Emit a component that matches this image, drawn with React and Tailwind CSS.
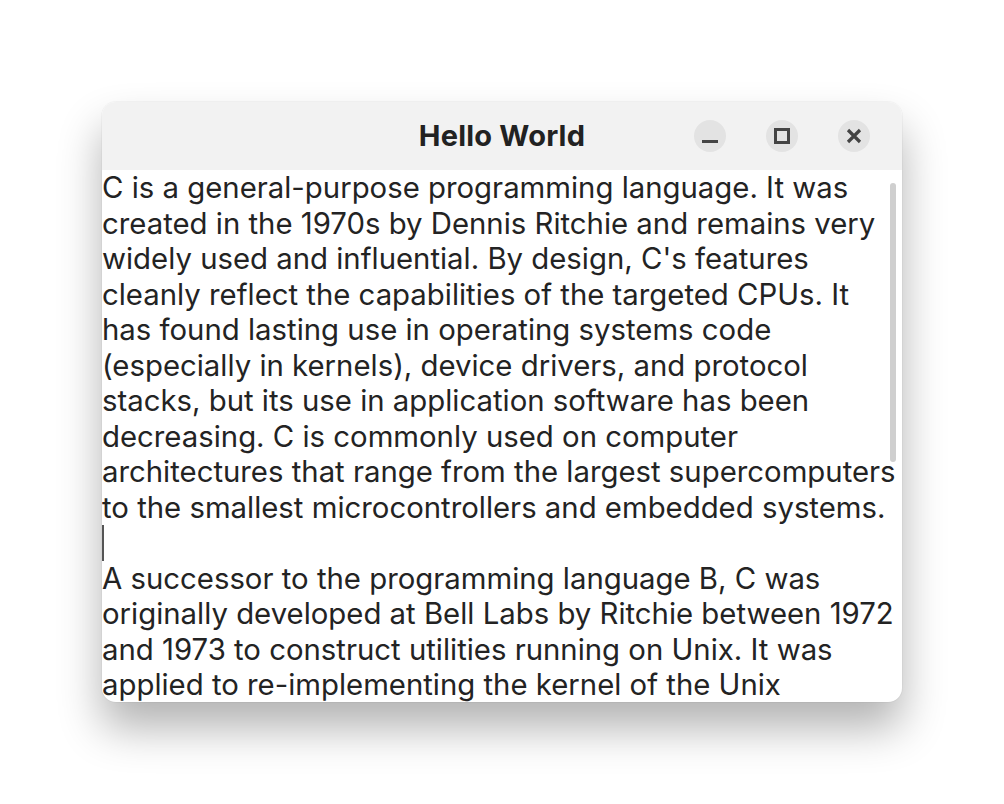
import React from "react";

const lines1 = [
  "C is a general-purpose programming language. It was",
  "created in the 1970s by Dennis Ritchie and remains very",
  "widely used and influential. By design, C's features",
  "cleanly reflect the capabilities of the targeted CPUs. It",
  "has found lasting use in operating systems code",
  "(especially in kernels), device drivers, and protocol",
  "stacks, but its use in application software has been",
  "decreasing. C is commonly used on computer",
  "architectures that range from the largest supercomputers",
  "to the smallest microcontrollers and embedded systems.",
];
const lines2 = [
  "A successor to the programming language B, C was",
  "originally developed at Bell Labs by Ritchie between 1972",
  "and 1973 to construct utilities running on Unix. It was",
  "applied to re-implementing the kernel of the Unix",
];

export default function App() {
  return (
    <div
      className="w-[1004px] h-[804px] bg-white pt-[102px] pl-[102px]"
      style={{ fontFamily: "Inter, 'Noto Sans', sans-serif" }}
    >
      <div className="w-[800px] h-[600px] rounded-[14px] bg-white flex flex-col overflow-hidden shadow-[0_26px_44px_rgba(0,0,0,0.3),0_0_0_1px_rgba(0,0,0,0.03)]">
        <div className="h-[68px] shrink-0 bg-[#f2f2f2] relative flex items-center justify-center">
          <div className="text-[29px] font-bold text-[#222222] tracking-[0.2px]">Hello World</div>
          <div className="absolute right-[32px] top-[18px] flex gap-[40px]">
            <div className="w-[32px] h-[32px] rounded-full bg-[#e3e3e3] flex items-center justify-center">
              <svg width="16" height="16" viewBox="0 0 16 16">
                <rect x="0" y="12" width="16" height="3" fill="#444" />
              </svg>
            </div>
            <div className="w-[32px] h-[32px] rounded-full bg-[#e3e3e3] flex items-center justify-center">
              <svg width="16" height="16" viewBox="0 0 16 16">
                <rect x="1.5" y="1.5" width="13" height="13" fill="none" stroke="#444" strokeWidth="3" />
              </svg>
            </div>
            <div className="w-[32px] h-[32px] rounded-full bg-[#e3e3e3] flex items-center justify-center">
              <svg width="16" height="16" viewBox="0 0 16 16">
                <path d="M2 2L14 14M14 2L2 14" stroke="#444" strokeWidth="3.2" />
              </svg>
            </div>
          </div>
        </div>
        <div className="relative flex-1 overflow-hidden">
          <div className="text-[29.33px] leading-[35.5px] text-[#232323] whitespace-nowrap">
            {lines1.map((l, i) => (
              <div key={i}>{l}</div>
            ))}
            <div className="h-[35.5px] flex items-center">
              <div className="w-[2px] h-[36px] bg-[#555555]" />
            </div>
            {lines2.map((l, i) => (
              <div key={"b" + i}>{l}</div>
            ))}
          </div>
          <div className="absolute right-[6px] top-[13px] w-[6px] h-[279px] rounded-full bg-[#cfcfcf]" />
        </div>
      </div>
    </div>
  );
}
